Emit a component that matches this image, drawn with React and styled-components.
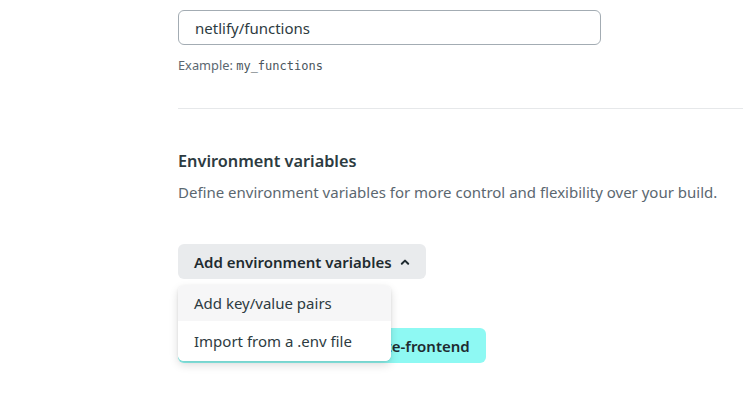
import styled, { createGlobalStyle } from "styled-components";

const Global = createGlobalStyle`
  html, body {
    margin: 0;
    padding: 0;
    background: #fff;
  }
  body {
    font-family: "Noto Sans", "Open Sans", sans-serif;
    color: #2d3b41;
  }
`;

const Page = styled.div`
  width: 743px;
  height: 401px;
  overflow: hidden;
  padding-left: 178px;
  box-sizing: border-box;
`;

const Label = styled.div`
  margin-top: -19px;
  font-size: 15px;
  font-weight: 600;
  line-height: 20px;
  color: #2d3b41;
`;

const Input = styled.input`
  display: block;
  margin-top: 9px;
  width: 423px;
  height: 35px;
  box-sizing: border-box;
  border: 1px solid #a3acb3;
  border-radius: 6px;
  padding: 0 16px;
  font-family: inherit;
  font-size: 15px;
  color: #2d3b41;
  outline: none;
`;

const Hint = styled.p`
  margin: 11px 0 0;
  font-size: 12.8px;
  line-height: 18px;
  color: #5b6770;
`;

const Code = styled.code`
  font-family: "DejaVu Sans Mono", "Liberation Mono", monospace;
  font-size: 12px;
  color: #4a555c;
`;

const Divider = styled.hr`
  margin: 33px 0 0;
  border: 0;
  border-top: 1px solid #e6e8ea;
`;

const Heading = styled.h3`
  margin: 41px 0 0;
  font-size: 16.3px;
  font-weight: 600;
  line-height: 22px;
  color: #2d3b41;
`;

const Description = styled.p`
  margin: 9px 0 0;
  font-size: 15px;
  line-height: 22px;
  color: #5b6770;
`;

const Actions = styled.div`
  position: relative;
  margin-top: 41px;
  display: flex;
  flex-direction: column;
  align-items: flex-start;
  gap: 49px;
`;

const Button = styled.button`
  display: inline-flex;
  align-items: center;
  gap: 8px;
  height: 35px;
  padding: 0 16px;
  border: 0;
  border-radius: 6px;
  background: ${(p) => (p.$primary ? "#8ef9f3" : "#e9ebed")};
  font-family: inherit;
  font-size: 15px;
  font-weight: 600;
  color: #1f2b30;
  cursor: pointer;
`;

const Menu = styled.ul`
  position: absolute;
  top: 41px;
  left: 0;
  width: 213px;
  margin: 0;
  padding: 0;
  list-style: none;
  background: #fff;
  border-radius: 6px;
  overflow: hidden;
  box-shadow: 0 4px 10px rgba(0, 0, 0, 0.14), 0 1px 3px rgba(0, 0, 0, 0.08);
`;

const MenuItem = styled.li`
  height: ${(p) => p.$h}px;
  display: flex;
  align-items: center;
  padding: 0 16px;
  font-size: 15px;
  color: #2d3b41;
  background: ${(p) => (p.$active ? "#f6f6f7" : "#fff")};
`;

const Caret = () => (
  <svg width="10" height="10" viewBox="0 0 10 10" aria-hidden="true">
    <path d="M1.8 6.8 L5 3.6 L8.2 6.8" fill="none" stroke="#1f2b30" strokeWidth="2" strokeLinecap="round" strokeLinejoin="round" />
  </svg>
);

export default function App() {
  return (
    <>
      <Global />
      <Page>
        <Label>Functions directory</Label>
        <Input defaultValue="netlify/functions" />
        <Hint>
          Example: <Code>my_functions</Code>
        </Hint>
        <Divider />
        <Heading>Environment variables</Heading>
        <Description>
          Define environment variables for more control and flexibility over your build.
        </Description>
        <Actions>
          <Button>
            Add environment variables <Caret />
          </Button>
          <Button $primary>Deploy my-netlify-demo-site-frontend</Button>
          <Menu>
            <MenuItem $active $h={36}>Add key/value pairs</MenuItem>
            <MenuItem $h={40}>Import from a .env file</MenuItem>
          </Menu>
        </Actions>
      </Page>
    </>
  );
}
